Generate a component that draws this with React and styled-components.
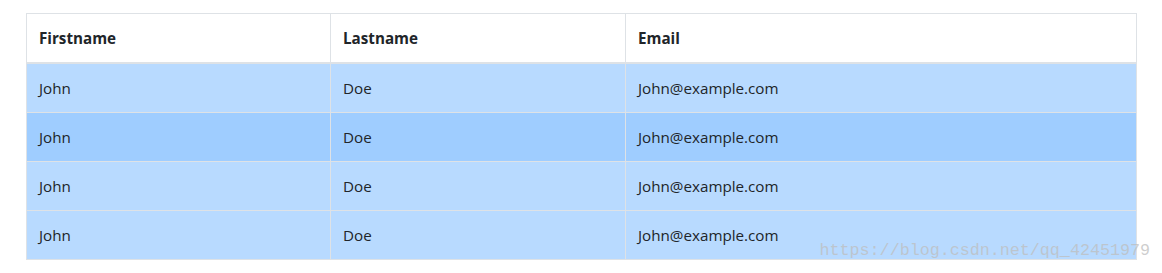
import styled, { createGlobalStyle } from "styled-components";

const GlobalStyle = createGlobalStyle`
  * {
    box-sizing: border-box;
  }
  body {
    margin: 0;
    background: #fff;
    color: #212529;
    font-family: "Open Sans", "Noto Sans", sans-serif;
  }
`;

const Page = styled.div`
  position: relative;
  padding: 13px 26px 0;
  height: 273px;
`;

const Table = styled.table`
  width: 1110px;
  border-collapse: collapse;
  table-layout: fixed;
  border: 1px solid #dee2e6;
  font-size: 15.2px;
  line-height: 24px;
`;

const HeadCell = styled.th`
  width: ${({ $width }) => $width}px;
  padding: 12px;
  text-align: left;
  font-weight: 700;
  border: 1px solid #dee2e6;
  border-bottom-width: 2px;
  background: #fff;
`;

const Row = styled.tr`
  background: ${({ $hover }) => ($hover ? "#9fcdff" : "#b8daff")};
`;

const Cell = styled.td`
  padding: 12px;
  border: 1px solid #dee2e6;
`;

const Watermark = styled.span`
  position: absolute;
  right: 12px;
  top: 240px;
  font-family: "Liberation Mono", "DejaVu Sans Mono", monospace;
  font-size: 16.7px;
  line-height: 22px;
  color: rgba(190, 190, 190, 0.75);
  pointer-events: none;
`;

const columns = [
  { label: "Firstname", width: 304 },
  { label: "Lastname", width: 295 },
  { label: "Email", width: 511 },
];

const rows = [0, 1, 2, 3];

export default function App() {
  return (
    <Page>
      <GlobalStyle />
      <Table>
        <thead>
          <tr>
            {columns.map((col) => (
              <HeadCell key={col.label} $width={col.width}>
                {col.label}
              </HeadCell>
            ))}
          </tr>
        </thead>
        <tbody>
          {rows.map((idx) => (
            <Row key={idx} $hover={idx === 1}>
              <Cell>John</Cell>
              <Cell>Doe</Cell>
              <Cell>John@example.com</Cell>
            </Row>
          ))}
        </tbody>
      </Table>
      <Watermark>https://blog.csdn.net/qq_42451979</Watermark>
    </Page>
  );
}
